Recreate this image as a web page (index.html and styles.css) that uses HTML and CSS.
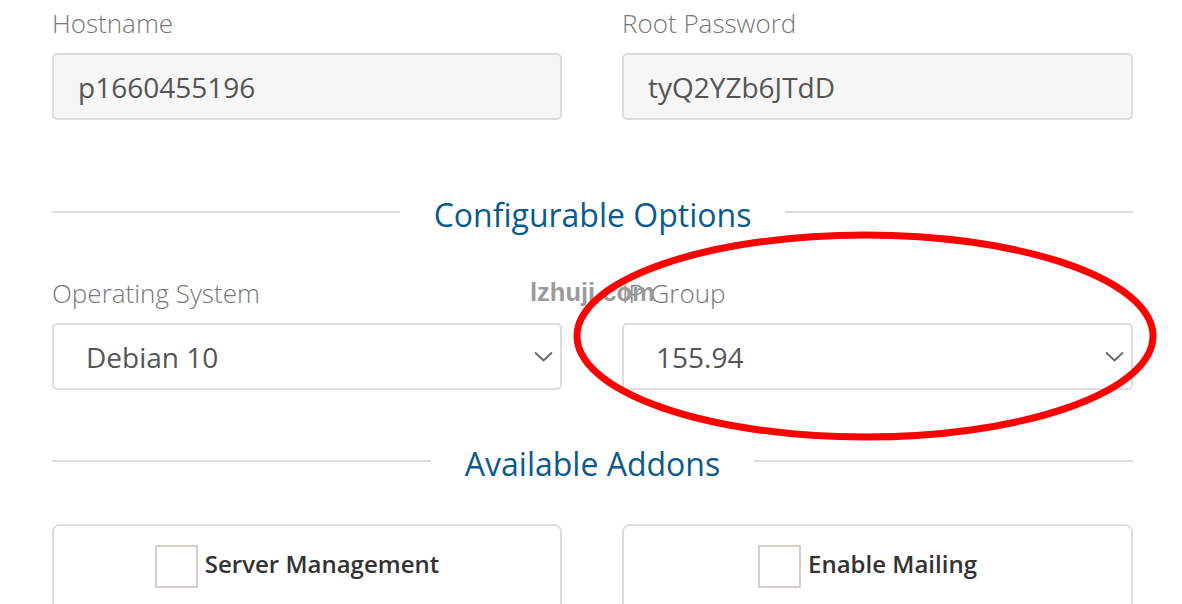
FILE: index.html
```html
<!DOCTYPE html>
<html lang="en">
<head>
  <meta charset="UTF-8">
  <meta name="viewport" content="width=device-width, initial-scale=1.0">
  <title>Configure Server</title>
  <link rel="stylesheet" href="styles.css">
</head>
<body>

  <div class="order">
    <div class="field-row">
      <div class="field">
        <label for="hostname">Hostname</label>
        <input type="text" id="hostname" class="form-input" value="p1660455196" readonly>
      </div>
      <div class="field">
        <label for="rootpw">Root Password</label>
        <input type="text" id="rootpw" class="form-input" value="tyQ2YZb6JTdD" readonly>
      </div>
    </div>

    <div class="sub-heading">
      <span class="rule"></span>
      <h2>Configurable Options</h2>
      <span class="rule"></span>
    </div>

    <div class="field-row">
      <div class="field">
        <label>Operating System</label>
        <div class="form-select">
          <span>Debian 10</span>
          <svg width="19" height="11" viewBox="0 0 19 11"><path d="M1 1.5 L9.5 9.5 L18 1.5" fill="none" stroke="#666" stroke-width="1.8"/></svg>
        </div>
      </div>
      <div class="field">
        <label>IP Group</label>
        <div class="form-select">
          <span>155.94</span>
          <svg width="19" height="11" viewBox="0 0 19 11"><path d="M1 1.5 L9.5 9.5 L18 1.5" fill="none" stroke="#666" stroke-width="1.8"/></svg>
        </div>
      </div>
    </div>

    <div class="sub-heading addons-heading">
      <span class="rule"></span>
      <h2>Available Addons</h2>
      <span class="rule"></span>
    </div>

    <div class="field-row">
      <div class="addon">
        <span class="check"></span>
        <span class="addon-name">Server Management</span>
      </div>
      <div class="addon">
        <span class="check"></span>
        <span class="addon-name">Enable Mailing</span>
      </div>
    </div>
  </div>

  <div class="watermark">lzhuji.com</div>

  <svg class="mark" width="1182" height="604" viewBox="0 0 1182 604">
    <ellipse cx="865" cy="336" rx="288" ry="101" fill="none" stroke="#ff0000" stroke-width="7"/>
  </svg>

</body>
</html>
```

FILE: styles.css
```css
body, html {
  margin: 0;
  padding: 0;
  background: #fff;
  font-family: 'Open Sans', sans-serif;
  color: #333;
  overflow: hidden;
}

.order {
  width: 1081px;
  margin-left: 52px;
  padding-top: 5px;
}

.field-row {
  display: grid;
  grid-template-columns: 510px 511px;
  column-gap: 60px;
}

.field label {
  display: block;
  font-size: 26px;
  line-height: 36px;
  font-weight: 300;
  color: #777;
  margin-bottom: 12px;
}

.form-input {
  display: block;
  box-sizing: border-box;
  width: 100%;
  height: 67px;
  padding: 0 24px;
  margin: 0;
  border: 2px solid #ddd;
  border-radius: 5px;
  background: #f6f6f6;
  font-family: 'Open Sans', sans-serif;
  font-size: 28px;
  color: #555;
  outline: none;
}

.form-select {
  box-sizing: border-box;
  height: 67px;
  padding: 0 7px 0 32px;
  border: 2px solid #ddd;
  border-radius: 5px;
  background: #fff;
  display: flex;
  align-items: center;
  justify-content: space-between;
  font-size: 28px;
  color: #555;
}

.sub-heading {
  display: flex;
  align-items: center;
  gap: 34px;
  margin-top: 71px;
  margin-bottom: 36px;
}

.sub-heading h2 {
  margin: 0;
  font-size: 32px;
  line-height: 48px;
  font-weight: 400;
  color: #0a5b8c;
  white-space: nowrap;
}

.rule {
  flex: 1;
  height: 2px;
  background: #ddd;
  margin-bottom: 6px;
}

.addons-heading {
  margin-top: 50px;
  margin-bottom: 36px;
}

.addon {
  box-sizing: border-box;
  height: 120px;
  border: 2px solid #ddd;
  border-radius: 8px;
  padding: 19px 20px 0 0;
  display: flex;
  align-items: flex-start;
  justify-content: center;
  gap: 7px;
}

.check {
  box-sizing: border-box;
  width: 43px;
  height: 43px;
  border: 2px solid #d3cec8;
  background: #fff;
}

.addon-name {
  font-size: 24px;
  line-height: 37px;
  font-weight: 600;
  color: #333;
}

.watermark {
  position: absolute;
  left: 530px;
  top: 280px;
  font-family: 'Liberation Sans', Arial, sans-serif;
  font-size: 25.5px;
  line-height: 1;
  font-weight: 700;
  color: #9a9a9a;
}

.mark {
  position: absolute;
  left: 0;
  top: 0;
  pointer-events: none;
}
```
